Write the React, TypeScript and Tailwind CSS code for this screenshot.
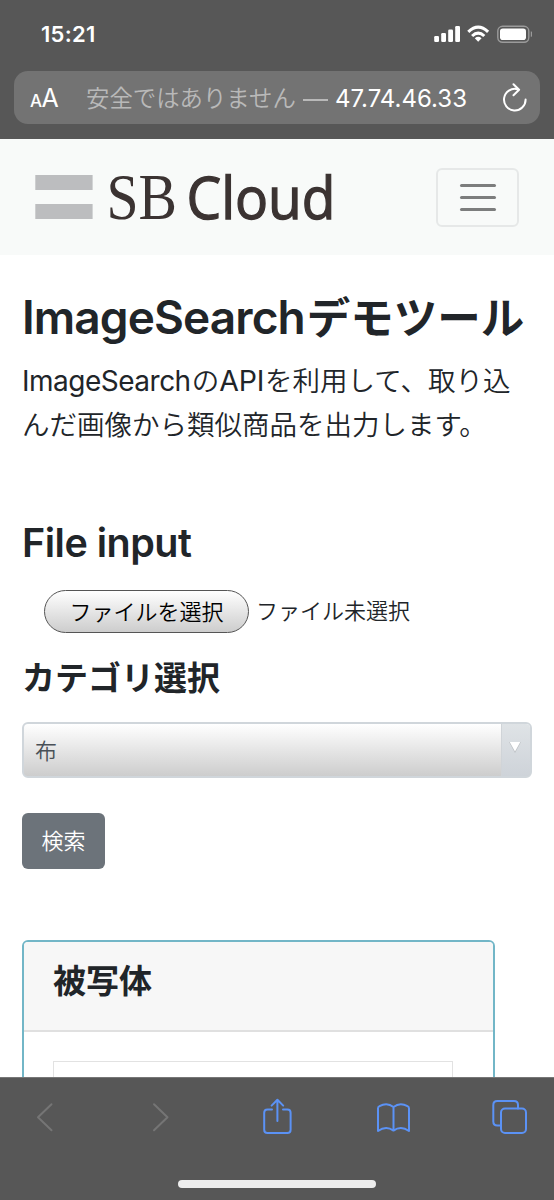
import React from "react";

function StatusBar() {
  return (
    <div className="flex h-[71px] items-start justify-between pl-[41px] pr-[22px]">
      <span className="mt-[19px] text-[22px] leading-[30px] font-semibold tracking-[0.3px] text-white">15:21</span>
      <svg className="mt-[22px]" width="100" height="24" viewBox="432 22 100 24" fill="white">
        <rect x="434.2" y="36" width="4.8" height="6" rx="1.2" />
        <rect x="441.2" y="33" width="4.8" height="9" rx="1.2" />
        <rect x="448.2" y="29.5" width="4.8" height="12.5" rx="1.2" />
        <rect x="455.2" y="26" width="4.8" height="16" rx="1.2" />
        <g fill="none" stroke="white" strokeWidth="3.1">
          <path d="M468.3 31.9 Q478.2 22.5 488.1 31.9" />
          <path d="M472.1 36 Q478.2 30.2 484.3 36" />
        </g>
        <path d="M474.8 38.2 Q478.2 35.3 481.6 38.2 L478.2 41.8 Z" />
        <rect x="497.8" y="26.3" width="31" height="16" rx="4.8" fill="none" stroke="#9b9b9b" strokeWidth="1.4" />
        <rect x="500" y="28.5" width="26" height="11.5" rx="2.8" />
        <path d="M530.8 31.3 Q532.8 32 532.8 34.2 Q532.8 36.4 530.8 37Z" fill="#9b9b9b" />
      </svg>
    </div>
  );
}

function AddressBar() {
  return (
    <div className="mx-[14px] flex h-[53px] items-center rounded-[14px] bg-[#737373] text-white">
      <div className="flex w-[72px] items-baseline pt-[3px] pl-[16px] font-medium">
        <span className="text-[17px] leading-[30px] tracking-[-0.5px]">A</span>
        <span className="text-[25px] leading-[30px] font-normal">A</span>
      </div>
      <div className="mt-[2px] flex h-[30px] flex-1 items-baseline whitespace-nowrap leading-[30px]">
        <span className="w-[210px] text-[23.4px] font-[350] text-[#b9b9b9]">安全ではありません</span>
        <span className="ml-[7px] h-[2px] w-[25px] -translate-y-[13px] self-end bg-[#b9b9b9]" />
        <span className="ml-[7px] text-[24px]">47.74.46.33</span>
      </div>
      <svg className="mr-[12px]" width="26" height="32" viewBox="0 0 26 32" fill="none" stroke="white" strokeWidth="2" strokeLinecap="round" strokeLinejoin="round">
        <path d="M15.5 7.2A10.8 10.8 0 1 0 23.6 17.5M11.5 2.3l5.6 5.5-5.6 5.4" />
      </svg>
    </div>
  );
}

function SiteHeader() {
  return (
    <header className="flex h-[116px] shrink-0 items-center justify-between bg-[#f8faf9] pl-[35px] pr-[35px]">
      <svg width="310" height="100" viewBox="35 146.500 310 100" role="img">
        <rect x="35.3" y="174.5" width="57.3" height="15" fill="#bcbdbf" />
        <rect x="35.3" y="203.500" width="57.3" height="15" fill="#bcbdbf" />
        <text x="106.500" y="218" fontSize="65" textLength="70.500" lengthAdjust="spacingAndGlyphs" fill="#3b3332" fontFamily="'Liberation Serif', serif">SB</text>
        <text x="186.5" y="218" fontSize="58" textLength="149" lengthAdjust="spacingAndGlyphs" fill="#3b3332" stroke="#3b3332" strokeWidth="1.3" fontFamily="'Open Sans', sans-serif">Cloud</text>
      </svg>
      <button className="flex h-[59px] w-[83px] flex-col items-center justify-center gap-[9px] rounded-[6px] border-2 border-[#e6e8e8]">
        <span className="h-[3px] w-[36px] rounded-full bg-[#7c7d7d]" />
        <span className="h-[3px] w-[36px] rounded-full bg-[#7c7d7d]" />
        <span className="h-[3px] w-[36px] rounded-full bg-[#7c7d7d]" />
      </button>
    </header>
  );
}

function Toolbar() {
  return (
    <footer className="flex h-[123px] shrink-0 flex-col items-center border-t border-[#777] bg-[#575757]">
      <svg width="554" height="80" viewBox="0 1078 554 80" fill="none" strokeLinecap="round" strokeLinejoin="round" strokeWidth="2">
        <g stroke="#757575">
          <path d="M51.5 1104.2 38 1117.3l13.500 13" />
          <path d="M154 1104.200l13.500 13.100-13.500 13" />
        </g>
        <g stroke="#5b92f5">
          <path d="M272 1109.400h-4.500q-3.300 0-3.300 3.300v17q0 3.300 3.300 3.300h19.800q3.300 0 3.300-3.300v-17q0-3.300-3.300-3.300H283M277.400 1121v-20.700M271.600 1105.600l5.800-5.800 5.800 5.800" />
          <path d="M393.500 1107v23.500M378 1131v-22.500q0-1.500 1.500-2.300 7.500-4.300 14 .8 6.500-5.100 14-.8 1.500.8 1.500 2.300V1131q-8-5.600-15.500-.4-7.500-5.200-15.500.4Z" />
          <rect x="501" y="1108.500" width="25" height="24.500" rx="4" />
          <path d="M501 1125.500h-3.700q-4 0-4-4V1105q0-4 4-4H514q4 0 4 4v3.500" />
        </g>
      </svg>
      <div className="mt-[22px] h-[8px] w-[198px] rounded-full bg-[#ededed]" />
    </footer>
  );
}

export default function App() {
  return (
    <div className="flex h-[1200px] w-[554px] flex-col overflow-hidden bg-white font-[Inter,'Noto_Sans_CJK_JP',sans-serif] text-[#212529]">
      <div className="h-[139px] shrink-0 bg-[#575757]">
        <StatusBar />
        <AddressBar />
      </div>
      <SiteHeader />
      <main className="flex min-h-0 flex-1 flex-col items-start overflow-hidden px-[22px] whitespace-nowrap">
        <h1 className="mt-[36px] h-[53px] text-[43.500px] leading-[53px] font-semibold">
          <span className="mr-[2px] text-[46px] tracking-[-0.9px]">ImageSearch</span>デモツール
        </h1>
        <p className="mt-[15px] h-[88px] text-[27.500px] leading-[44px] font-[350]">
          <span className="mr-px text-[28px] font-normal tracking-[-0.5px]">ImageSearch</span>の<span className="mr-px text-[28.500px] font-normal tracking-[-0.2px]">API</span>を利用して、取り込
          <br />
          んだ画像から類似商品を出力します。
        </p>
        <h2 className="mt-[73px] h-[47px] text-[39.500px] leading-[47px] font-semibold tracking-[-0.5px]">File input</h2>
        <div className="mt-[23px] ml-[22px] flex h-[43px] items-center">
          <button className="h-[43px] w-[205px] rounded-full border-[1.5px] border-[#555] bg-linear-to-b from-white to-[#cdcdcd] pt-[2px] text-[22px] font-[350] text-black">ファイルを選択</button>
          <span className="ml-[7px] text-[22px] font-[350]">ファイル未選択</span>
        </div>
        <h3 className="mt-[25px] h-[40px] text-[33px] leading-[40px] font-semibold">カテゴリ選択</h3>
        <div className="mt-[24px] flex h-[56px] w-[510px] shrink-0 overflow-hidden rounded-[6px] border-2 border-[#d0d6db] bg-linear-to-b from-white to-[#cdcdcd]">
          <span className="flex-1 pl-[11px] text-[22px] leading-[54px] font-[350] text-[#495057]">布</span>
          <span className="flex w-[29px] items-center justify-center border-l border-[#d0d4d8] bg-linear-to-b from-[#dfe3e6] to-[#ced3d9] pr-[2px]">
            <svg className="-mt-[6px]" width="12" height="12" viewBox="0 0 12 12">
              <path d="M0 1h12L6 12Z" fill="#bbbfc3" />
              <path d="M.7 1h10.600L6 10.500Z" fill="white" />
            </svg>
          </span>
        </div>
        <button className="mt-[35px] h-[56px] w-[83px] shrink-0 rounded-[6px] bg-[#6c737a] pt-px text-[22px] font-[350] text-white">検索</button>
        <section className="mt-[71px] h-[260px] w-[473px] shrink-0 overflow-hidden rounded-[6px] border-2 border-[#72b6c7]">
          <div className="h-[90px] border-b-2 border-[#e0e0e0] bg-[#f7f7f7] pt-[19px] pl-[29px]">
            <h3 className="text-[33px] leading-[40px] font-semibold">被写体</h3>
          </div>
          <div className="mt-[29px] ml-[29px] h-[200px] w-[400px] border border-[#e2e2e2]" />
        </section>
      </main>
      <Toolbar />
    </div>
  );
}
